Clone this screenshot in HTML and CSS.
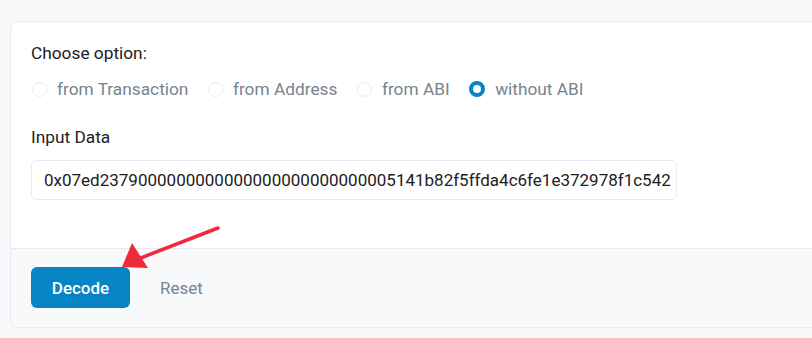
FILE: index.html
```html
<!DOCTYPE html>
<html lang="en">
<head>
    <meta charset="UTF-8">
    <title>Input Data Decoder</title>
    <link rel="stylesheet" href="styles.css">
</head>
<body>
    <div class="card">
        <div class="card-body">
            <div class="field-label">Choose option:</div>
            <div class="options">
                <label class="option"><span class="radio"></span>from Transaction</label>
                <label class="option"><span class="radio"></span>from Address</label>
                <label class="option"><span class="radio"></span>from ABI</label>
                <label class="option"><span class="radio checked"></span>without ABI</label>
            </div>

            <div class="field-label input-label">Input Data</div>
            <input class="data-input" type="text" value="0x07ed2379000000000000000000000000005141b82f5ffda4c6fe1e372978f1c5421ed9c8ab0000000000000000">
        </div>
        <div class="card-footer">
            <button class="btn-decode">Decode</button>
            <button class="btn-reset">Reset</button>
        </div>

        <svg class="arrow" width="240" height="80" viewBox="0 0 240 80">
            <line x1="218" y1="8" x2="138" y2="39" stroke="#ee2b3b" stroke-width="3.5" stroke-linecap="round"/>
            <polygon points="122,47 132,23 148,48" fill="#ee2b3b"/>
        </svg>
    </div>
</body>
</html>
```

FILE: styles.css
```css
* {
    margin: 0;
    padding: 0;
    box-sizing: border-box;
}

body {
    font-family: Roboto, "Liberation Sans", sans-serif;
    background: #f8f9fa;
    padding: 21px 0 0 10px;
    overflow: hidden;
    height: 338px;
}

.card {
    position: relative;
    width: 830px;
    background: white;
    border: 1px solid #e7eaf3;
    border-radius: 8px;
}

.card-body {
    padding: 19px 20px 48px;
}

.field-label {
    font-size: 17.3px;
    line-height: 24px;
    color: #1e2022;
}

.options {
    display: flex;
    gap: 18.5px;
    margin-top: 12px;
}

.option {
    display: flex;
    align-items: center;
    gap: 10px;
    font-size: 17.3px;
    line-height: 24px;
    color: #77838f;
}

.radio {
    width: 15px;
    height: 15px;
    border: 1px solid #e7eaf3;
    border-radius: 50%;
    margin-left: 1px;
}

.radio.checked {
    width: 16px;
    height: 16px;
    border: 4.5px solid #0784c3;
}

.input-label {
    margin-top: 24px;
}

.data-input {
    display: block;
    margin-top: 11px;
    width: 646px;
    height: 40px;
    padding: 0 4px 0 12px;
    border: 1px solid #e7eaf3;
    border-radius: 5px;
    font-family: Roboto, "Liberation Sans", sans-serif;
    font-size: 17px;
    color: #1e2022;
    background: white;
    outline: none;
}

.card-footer {
    display: flex;
    align-items: center;
    gap: 10px;
    background: #f8f9fa;
    border-top: 1px solid #e7eaf3;
    border-radius: 0 0 8px 8px;
    padding: 18px 20px 19px;
}

.btn-decode {
    width: 99px;
    height: 41px;
    background: #0784c3;
    color: white;
    border: none;
    border-radius: 6px;
    font-family: inherit;
    font-size: 17px;
    font-weight: 500;
}

.btn-reset {
    background: none;
    border: none;
    padding: 0 20px;
    color: #77838f;
    font-family: inherit;
    font-size: 17px;
}

.arrow {
    position: absolute;
    left: -11px;
    top: 198px;
}
```
